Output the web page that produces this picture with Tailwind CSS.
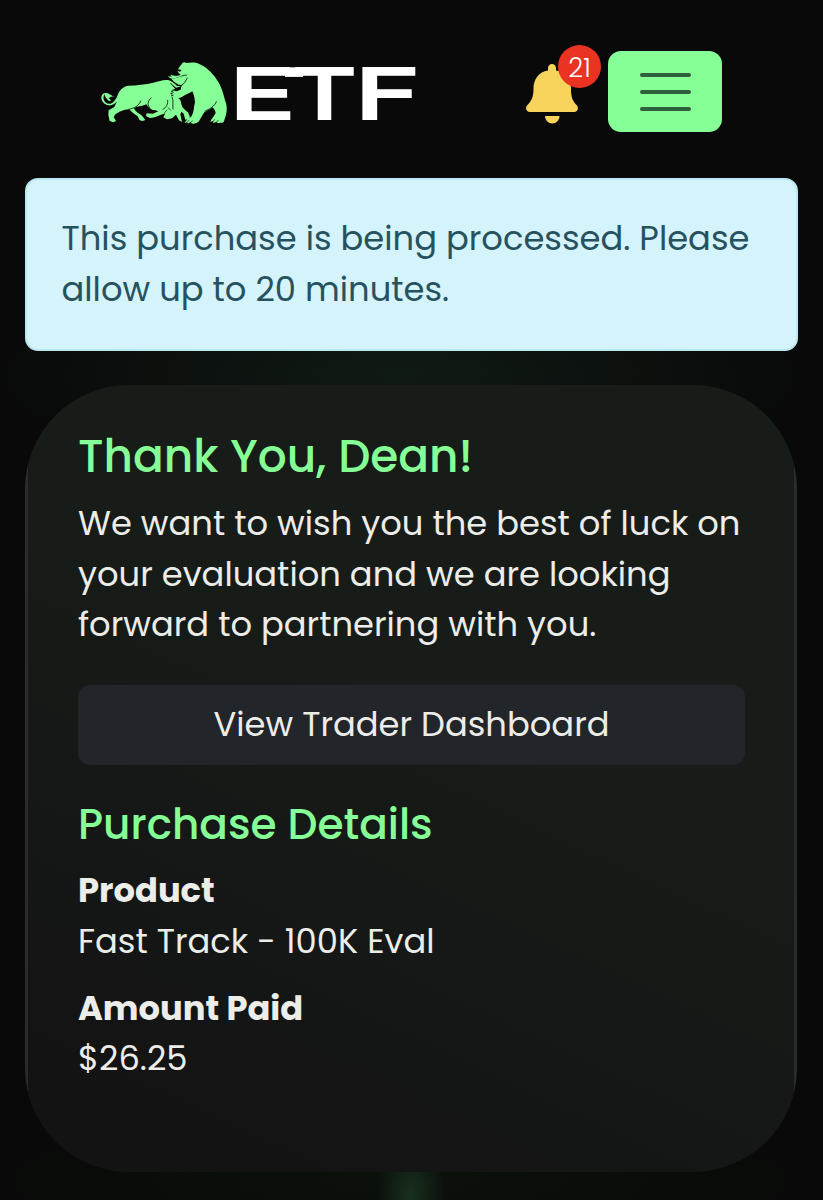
<!DOCTYPE html>
<html lang="en">
<head>
  <meta charset="UTF-8">
  <title>ETF - Purchase</title>
  <script src="https://cdn.jsdelivr.net/npm/@tailwindcss/browser@4"></script>
</head>
<body class="bg-[#080908] font-[Poppins,Inter,sans-serif] text-[33.74px] leading-[50.7px] text-[#ecece9]">

  <div class="h-[1200px] overflow-hidden px-[25px] bg-[radial-gradient(ellipse_420px_110px_at_400px_375px,#101a15,transparent),radial-gradient(ellipse_34px_60px_at_411px_1195px,#18301f,transparent),radial-gradient(ellipse_440px_80px_at_400px_1180px,#0c110c,transparent)]">

    <header class="flex h-[178px] pl-[65px] pt-[50px]">
      <!-- logo -->
      <svg class="h-[85px] w-[345px] shrink-0 overflow-visible" viewBox="0 0 345 85">
        <g transform="scale(.33333)">
          <path fill="#86ff96" d="M78 139C68 137 58 140 55 147C60 145 60 149 63 152C59 154 54 152 51 147C44 139 43 134 46 131C42 134 39 141 41 148C44 158 52 163 61 161C72 158 79 146 83 135C89 121 98 110 114 107C143 106 166 103 190 98C209 94 222 87 237 91C249 95 253 103 263 107L276 109C280 96 284 86 290 77L274 78L257 84L243 86L233 79L246 80L240 74L258 78L272 75C269 70 263 68 262 63L270 65L275 60L264 58C267 52 271 47 275 43C277 37 283 35 289 39C302 38 315 36 328 42C349 51 362 65 375 81C391 102 399 124 405 151C411 165 412 181 408 194L402 214C399 221 391 217 385 220L378 216L370 219L368 213L361 216C364 205 373 199 377 189C376 181 371 176 367 172C358 180 350 182 343 187C337 195 334 203 329 210C325 219 315 221 307 221L300 217L294 221L292 217L284 219C287 210 298 207 305 198C313 184 311 170 315 157C314 143 311 132 307 124C294 131 284 136 274 142L264 145L256 142L245 139L252 137L240 133L251 133L240 125L253 128L244 121L260 124L272 119L274 109L258 113C251 108 246 100 239 98C245 103 250 111 256 117L247 119L241 129L245 139L265 145C273 149 273 158 275 166C277 174 286 181 294 187L300 202L295 208L286 209L281 191L275 185L271 193L276 216L267 211L258 194L246 205L231 208L220 202L226 190L211 195L194 202L180 204L168 198L170 190L189 191L205 184L196 181C186 181 176 175 169 163C163 166 151 170 141 170L132 175C136 185 145 190 154 195L166 210L158 213L149 211L143 199L130 190L117 178L105 179C92 183 84 186 76 193L71 201L78 213L70 217L59 213L55 195L56 181L73 171L81 154C73 163 65 168 55 166C43 163 34 153 34 143C34 132 43 126 53 130L68 138Z"/>
          <!-- far arm of the bear -->
          <path fill="#86ff96" d="M244 86L258 84L275 79L291 77L284 90L279 106L266 104L252 95Z"/>
          <g fill="none" stroke="#0a0c0a" stroke-linecap="round" stroke-linejoin="round">
            <path stroke-width="2.500" d="M117 178C133 174 146 169 152 153M183 144C172 155 171 166 180 174M219 178C230 172 234 161 233 151M246 141C252 151 247 164 249 177M345 183C360 177 374 169 379 155M292 84L284 98L272 108L258 105"/>
            <path stroke-width="2" d="M276 77L290 75M297 211L291 217M307 213L301 218M373 209L369 216M384 211L379 218M234 173L243 181M224 188L231 180"/>
          </g>
        </g>
        <g class="fill-white stroke-white stroke-[6px] font-[Inter,sans-serif] text-[64.6px] font-extralight [text-rendering:geometricPrecision]">
          <text x="140.7" y="67.3" textLength="62" lengthAdjust="spacingAndGlyphs">E</text>
          <text x="204.3" y="67.3" textLength="60.5" lengthAdjust="spacingAndGlyphs">T</text>
          <text x="266.3" y="67.3" textLength="62" lengthAdjust="spacingAndGlyphs">F</text>
        </g>
        <rect x="195" y="17.3" width="18" height="9.6" fill="#fff"/>
      </svg>

      <!-- notifications -->
      <div class="relative ml-[91px] mt-[14px] h-[60px] w-[52px]">
        <svg class="h-[60px] w-[52px]" viewBox="0 0 52 60" fill="#f9d45c">
          <path d="M26 0c2.400 0 4 1.700 4 4v2.500C39.500 8 45 15 45 24.500c0 9 1.500 12.500 6.200 17.300 1.700 2.700.4 6.200-3.200 6.200H4c-3.600 0-4.900-3.500-3.200-6.200C5.500 37 7.500 33.500 7.500 24.500 7.500 15 13 8 22 6.500V4c0-2.300 1.600-4 4-4z"/>
          <path d="M19 52h14.500c0 4-3.200 7.500-7.200 7.500S19 56 19 52z"/>
        </svg>
        <span class="absolute left-[32px] top-[-19px] flex size-[43px] items-center justify-center rounded-full bg-[#ea3323] pt-[3px] text-[26px] font-light text-white">21</span>
      </div>

      <button class="ml-[30px] mt-[1px] flex h-[81px] w-[114px] flex-col items-center justify-center gap-[13px] rounded-[13px] bg-[#86ff96]">
        <span class="h-1 w-[51px] rounded-full bg-[#2f5f3b]"></span>
        <span class="h-1 w-[51px] rounded-full bg-[#2f5f3b]"></span>
        <span class="h-1 w-[51px] rounded-full bg-[#2f5f3b]"></span>
      </button>
    </header>

    <div class="h-[173px] w-[773px] whitespace-nowrap rounded-[13px] border-2 border-[#b9e8f1] bg-[#d5f3fb] pl-[34.5px] pt-[34px] text-[#265260]">
      <p>This purchase is being processed. Please</p>
      <p>allow up to 20 minutes.</p>
    </div>

    <main class="mt-[34px] h-[787px] w-[772px] overflow-hidden whitespace-nowrap rounded-[104px]">
      <div class="h-full border-x-[3px] border-[#292c2a] bg-[linear-gradient(25deg,#131313_10%,#151816_35%,#171c18_60%,#181c19)] pl-[50px] pr-[49px] pt-[44px]">
        <h1 class="h-[70px] text-[45.4px] font-medium leading-[54px] text-[#86ff96]">Thank You, Dean!</h1>
        <p>We want to wish you the best of luck on</p>
        <p>your evaluation and we are looking</p>
        <p>forward to partnering with you.</p>
        <a class="mt-[34px] block h-[80px] rounded-[12px] bg-[#222529] text-center leading-[80px]">View Trader Dashboard</a>
        <h2 class="mt-[34px] h-[67px] text-[42.2px] font-medium leading-[51px] text-[#86ff96]">Purchase Details</h2>
        <p class="font-bold">Product</p>
        <p>Fast Track - 100K Eval</p>
        <p class="mt-[16px] font-bold">Amount Paid</p>
        <p>$26.25</p>
      </div>
    </main>
  </div>

</body>
</html>
